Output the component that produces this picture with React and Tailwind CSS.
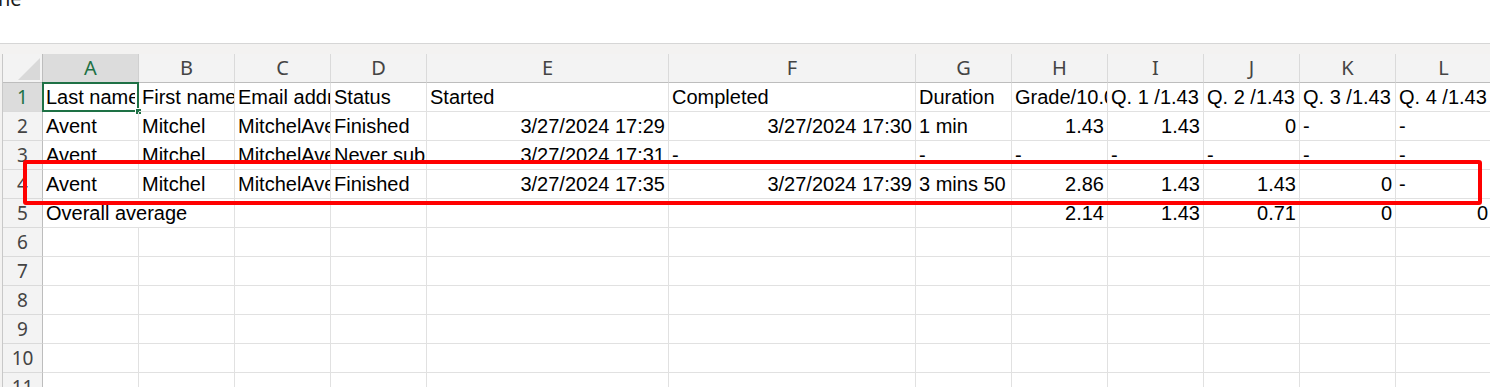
import React from 'react';

const FONT = { fontFamily: '"Liberation Sans", Arial, sans-serif' };
const UI_FONT = { fontFamily: '"Noto Sans", "Open Sans", sans-serif' };

const letters = ['A', 'B', 'C', 'D', 'E', 'F', 'G', 'H', 'I', 'J', 'K', 'L'];

// r = right aligned (numbers / dates)
const rows = [
    [
        { t: 'Last name' }, { t: 'First name' }, { t: 'Email address' }, { t: 'Status' },
        { t: 'Started' }, { t: 'Completed' }, { t: 'Duration' }, { t: 'Grade/10.00' },
        { t: 'Q. 1 /1.43' }, { t: 'Q. 2 /1.43' }, { t: 'Q. 3 /1.43' }, { t: 'Q. 4 /1.43' },
    ],
    [
        { t: 'Avent' }, { t: 'Mitchel' }, { t: 'MitchelAvent@example.com' }, { t: 'Finished' },
        { t: '3/27/2024 17:29', r: true }, { t: '3/27/2024 17:30', r: true }, { t: '1 min' },
        { t: '1.43', r: true }, { t: '1.43', r: true }, { t: '0', r: true }, { t: '-' }, { t: '-' },
    ],
    [
        { t: 'Avent' }, { t: 'Mitchel' }, { t: 'MitchelAvent@example.com' }, { t: 'Never submitted' },
        { t: '3/27/2024 17:31', r: true }, { t: '-' }, { t: '-' },
        { t: '-' }, { t: '-' }, { t: '-' }, { t: '-' }, { t: '-' },
    ],
    [
        { t: 'Avent' }, { t: 'Mitchel' }, { t: 'MitchelAvent@example.com' }, { t: 'Finished' },
        { t: '3/27/2024 17:35', r: true }, { t: '3/27/2024 17:39', r: true }, { t: '3 mins 50 secs' },
        { t: '2.86', r: true }, { t: '1.43', r: true }, { t: '1.43', r: true }, { t: '0', r: true }, { t: '-' },
    ],
    [
        { t: 'Overall average', span: 2 }, { t: '' }, { t: '' }, { t: '' }, { t: '' }, { t: '' },
        { t: '2.14', r: true }, { t: '1.43', r: true }, { t: '0.71', r: true }, { t: '0', r: true }, { t: '0', r: true },
    ],
];

const emptyRow = Array.from({ length: 12 }, () => ({ t: '' }));
const allRows = [...rows, ...Array.from({ length: 6 }, () => emptyRow)];

const Cell = ({ cell, active }) => (
    <div
        className={`relative h-[29px] border-r border-b border-[#e1e1e1] flex items-center px-[3px] text-[20px] text-black whitespace-nowrap ${
            cell.span === 2 ? 'col-span-2' : ''
        } ${cell.r ? 'justify-end' : ''} ${active ? 'overflow-visible' : 'overflow-hidden'}`}
        style={FONT}
    >
        <span className={active ? 'block w-full overflow-hidden' : ''}>{cell.t}</span>
        {active && (
            <>
                <div className="absolute -left-[1px] -top-[1px] -right-[1px] -bottom-[1px] border-2 border-[#1e7145]" />
                <div className="absolute -right-[4px] -bottom-[4px] w-[7px] h-[7px] bg-[#1e7145] border border-white" />
            </>
        )}
    </div>
);

const App = () => {
    return (
        <div className="relative w-full h-[387px] overflow-hidden bg-white">
            <div className="h-[43px] overflow-hidden">
                <div className="-mt-[11px] -ml-[2px] text-[20px] leading-none text-[#1b1b1b]" style={UI_FONT}>
                    ne
                </div>
            </div>
            <div className="h-[11px] bg-[#f3f2f1] border-t border-[#d6d6d6]" />

            <div className="grid grid-cols-[3px_40px_96px_96px_96px_96px_242px_247px_96px_96px_96px_96px_96px_96px] w-[1492px]">
                {/* column header row */}
                <div className="h-[29px] bg-[#f3f2f1] border-r border-[#c8c8c8]" />
                <div className="h-[29px] bg-[#f3f3f3] border-r border-b border-[#bdbdbd] flex items-end justify-end pr-[2px] pb-[2px]">
                    <svg width="22" height="22" viewBox="0 0 22 22">
                        <polygon points="22,0 22,22 0,22" fill="#d9d9d9" />
                    </svg>
                </div>
                {letters.map((l, i) => (
                    <div
                        key={l}
                        className={`h-[29px] border-r border-b flex items-center justify-center text-[20px] ${
                            i === 0
                                ? 'bg-[#dcdcdc] text-[#1e7145] border-r-[#d0d0d0] border-b-[#bdbdbd]'
                                : 'bg-[#f3f3f3] text-[#444444] border-r-[#dadada] border-b-[#bdbdbd]'
                        }`}
                        style={UI_FONT}
                    >
                        {l}
                    </div>
                ))}

                {allRows.map((row, ri) => (
                    <React.Fragment key={ri}>
                        <div className="h-[29px] bg-[#f3f2f1] border-r border-[#c8c8c8]" />
                        <div
                            className={`h-[29px] border-r border-b border-r-[#bdbdbd] border-b-[#dadada] flex items-center justify-center text-[19px] ${
                                ri === 0 ? 'bg-[#dcdcdc] text-[#1e7145]' : 'bg-[#f3f3f3] text-[#444444]'
                            }`}
                            style={UI_FONT}
                        >
                            {ri + 1}
                        </div>
                        {row.map((cell, ci) => (
                            <Cell key={ci} cell={cell} active={ri === 0 && ci === 0} />
                        ))}
                    </React.Fragment>
                ))}
            </div>

            {/* highlight drawn over row 4 */}
            <div className="absolute left-[23px] top-[160px] w-[1459px] h-[45px] border-4 border-[#ff0000] rounded-[3px] pointer-events-none" />
        </div>
    );
};

export default App;
